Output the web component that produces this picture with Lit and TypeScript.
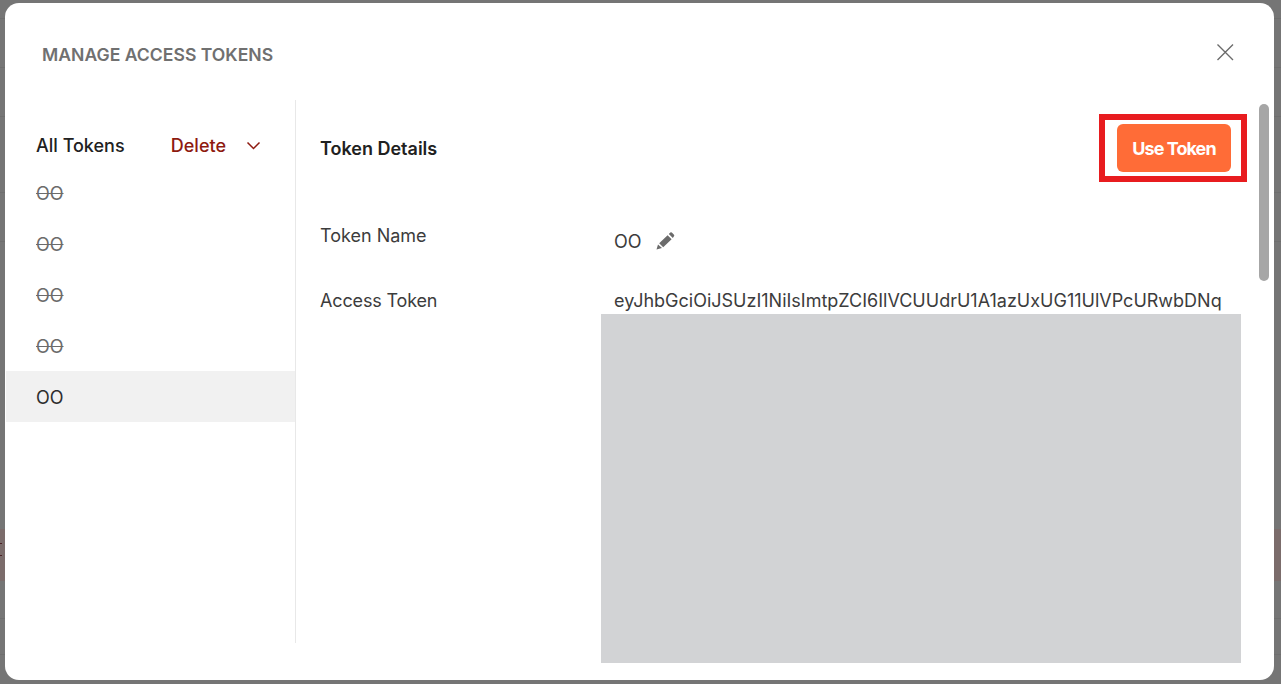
import { LitElement, html, css } from "lit";
import { customElement } from "lit/decorators.js";

const LINES = [18, 67, 116, 192, 241, 618, 654];

@customElement("app-root")
export class AppRoot extends LitElement {
  static styles = css`
    :host {
      display: block;
      width: 1281px;
      height: 684px;
      overflow: hidden;
      font-family: Inter, "Liberation Sans", sans-serif;
      font-size: 18px;
      color: #3c3c3c;
    }
    .backdrop {
      position: relative;
      height: 100%;
      box-sizing: border-box;
      padding: 3px 7px 4px 5px;
      background: #757575;
    }
    .tint {
      position: absolute;
      left: 0;
      right: 0;
      top: 529px;
      height: 52px;
      background: #7b6c6b;
    }
    .line {
      position: absolute;
      left: 0;
      right: 0;
      height: 1px;
      background: #6e6e6e;
    }
    .dash {
      position: absolute;
      left: 0;
      width: 2px;
      height: 1px;
      background: #4a2024;
    }
    .modal {
      position: relative;
      height: 100%;
      display: flex;
      flex-direction: column;
      background: #fff;
      border-radius: 14px;
      overflow: hidden;
    }
    .header {
      flex: none;
      height: 97px;
      box-sizing: border-box;
      padding: 41px 40px 0 37px;
      display: flex;
      justify-content: space-between;
      align-items: flex-start;
    }
    .title {
      font-size: 17.6px;
      line-height: 22px;
      font-weight: 600;
      color: #707070;
    }
    .close {
      display: block;
      margin-top: -1px;
    }
    .body {
      flex: none;
      display: flex;
      height: 580px;
    }
    .side {
      flex: none;
      width: 291px;
      height: 543px;
      box-sizing: border-box;
      border-right: 1px solid #e8e8e8;
    }
    .side-head {
      height: 67px;
      box-sizing: border-box;
      padding: 34px 34px 0 31px;
      display: flex;
      align-items: flex-start;
      line-height: 24px;
    }
    .all {
      font-weight: 500;
      color: #212121;
      flex: 1;
    }
    .delete {
      font-weight: 500;
      color: #8e1a10;
      margin-right: 1px;
    }
    .chev {
      display: block;
      margin: 5px 0 0 19px;
    }
    .token {
      height: 51px;
      box-sizing: border-box;
      margin-left: 1px;
      padding: 1px 30px 0;
      display: flex;
      align-items: center;
    }
    .token.expired {
      color: #6b6b6b;
      text-decoration: line-through;
    }
    .token.active {
      background: #f1f1f1;
      color: #2e2e2e;
    }
    .main {
      flex: 1;
      min-width: 0;
      display: flex;
      flex-direction: column;
      padding-left: 24px;
    }
    .main-head {
      flex: none;
      height: 88px;
      box-sizing: border-box;
      padding: 24px 43px 0 0;
      display: flex;
      justify-content: space-between;
      align-items: flex-start;
    }
    .details {
      font-weight: 600;
      color: #212121;
      line-height: 50px;
    }
    .use {
      width: 114px;
      height: 48px;
      border: 0;
      padding: 0;
      border-radius: 6px;
      background: #ff6c37;
      color: #fff;
      font: 700 18px Inter, "Liberation Sans", sans-serif;
      letter-spacing: -0.95px;
    }
    .row {
      display: flex;
    }
    .label {
      flex: none;
      width: 295px;
      line-height: 24px;
    }
    .name-row {
      height: 65px;
      padding-top: 36px;
    }
    .name-val {
      display: flex;
      align-items: center;
      gap: 14px;
      height: 24px;
      margin: 5px 0 0 -1px;
    }
    .pen {
      display: block;
    }
    .access-row {
      flex: 1;
    }
    .access-label {
      letter-spacing: -0.15px;
    }
    .token-col {
      width: 640px;
      margin-left: -14px;
    }
    .token-text {
      padding-left: 13px;
      line-height: 24px;
      height: 25px;
      white-space: nowrap;
    }
    .mask {
      height: 349px;
      background: #d2d3d5;
    }
    .scrollbar {
      position: absolute;
      left: 1254px;
      top: 101px;
      width: 10px;
      height: 177px;
      border-radius: 5px;
      background: #a6a6a6;
    }
    .highlight {
      position: absolute;
      left: 1094px;
      top: 111px;
      width: 148px;
      height: 68px;
      box-sizing: border-box;
      border: 6px solid #e81c1f;
    }
  `;

  render() {
    return html`
      <div class="backdrop">
        <div class="tint"></div>
        ${LINES.map((y) => html`<div class="line" style="top:${y}px"></div>`)}
        <div class="dash" style="top:543px"></div>
        <div class="dash" style="top:555px"></div>
        <div class="modal">
          <div class="header">
            <div class="title">MANAGE ACCESS TOKENS</div>
            <svg class="close" width="18" height="18" viewBox="0 0 18 18" fill="none" stroke="#6b6b6b" stroke-width="1.4">
              <path d="M1.5 1.5 L17 17 M17 1.5 L1.5 17"></path>
            </svg>
          </div>
          <div class="body">
            <div class="side">
              <div class="side-head">
                <span class="all">All Tokens</span>
                <span class="delete">Delete</span>
                <svg class="chev" width="15" height="12" viewBox="0 0 15 12" fill="none" stroke="#8e1a10" stroke-width="1.5">
                  <path d="M1.5 3.5 L7.5 9.5 L13.5 3.5"></path>
                </svg>
              </div>
              <div class="token expired">OO</div>
              <div class="token expired">OO</div>
              <div class="token expired">OO</div>
              <div class="token expired">OO</div>
              <div class="token active">OO</div>
            </div>
            <div class="main">
              <div class="main-head">
                <span class="details">Token Details</span>
                <button class="use">Use Token</button>
              </div>
              <div class="row name-row">
                <span class="label">Token Name</span>
                <div class="name-val">
                  <span>OO</span>
                  <svg class="pen" width="19" height="18" viewBox="0 0 19 18" fill="#6b6b6b">
                    <path d="M0.5 17.5 L2 12.5 L6 16 Z M3.2 11.3 L11.6 3.2 L15.6 7.2 L7.2 15.3 Z M12.8 2 L14.3 0.6 Q15 0 15.8 0.6 L18 2.8 Q18.6 3.5 18 4.2 L16.8 6 Z"></path>
                  </svg>
                </div>
              </div>
              <div class="row access-row">
                <span class="label access-label">Access Token</span>
                <div class="token-col">
                  <div class="token-text">eyJhbGciOiJSUzI1NiIsImtpZCI6IlVCUUdrU1A1azUxUG11UlVPcURwbDNq</div>
                  <div class="mask"></div>
                </div>
              </div>
            </div>
          </div>
          <div class="scrollbar"></div>
          <div class="highlight"></div>
        </div>
      </div>
    `;
  }
}
